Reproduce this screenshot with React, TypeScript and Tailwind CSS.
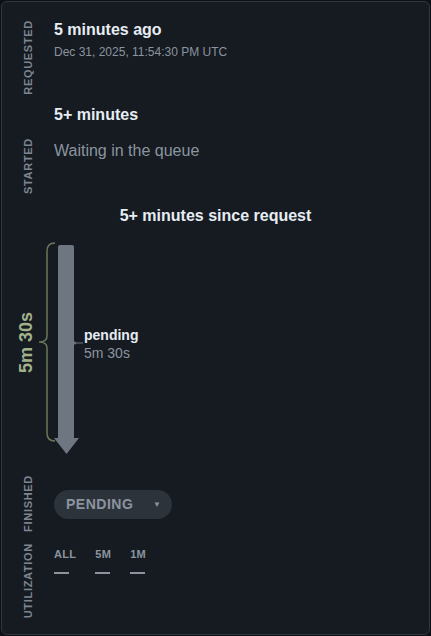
const font = { fontFamily: '"Liberation Sans", Arial, sans-serif' };

function SideLabel({ text }: { text: string }) {
  return (
    <div className="w-[52px] shrink-0 flex flex-col justify-end items-center pb-1">
      <span className="[writing-mode:vertical-rl] rotate-180 text-[11px] leading-[12px] font-bold tracking-[0.7px] text-[#7d8590] uppercase">
        {text}
      </span>
    </div>
  );
}

function Timeline() {
  return (
    <div className="flex pl-[13px] mt-[14px] h-[216px]">
      {/* total duration, read sideways */}
      <div className="w-[21px] h-[200px] mt-[3px] flex items-center justify-center">
        <span className="[writing-mode:vertical-rl] rotate-180 text-[18px] leading-[22px] font-bold text-[#a3b18a] whitespace-nowrap">
          5m 30s
        </span>
      </div>

      <svg width="48" height="216" viewBox="0 0 48 216" className="shrink-0">
        <path
          d="M19 3 Q11 3 11 11 L11 96 Q11 102 3 102 Q11 102 11 108 L11 193 Q11 201 19 201"
          fill="none"
          stroke="#6b7757"
          strokeWidth="1.5"
        />
        <path d="M22 7 Q22 5 24 5 L36 5 Q38 5 38 7 L38 198 L22 198 Z" fill="#6e7681" />
        <polygon points="18,198 43,198 30.5,214" fill="#6e7681" />
        <line x1="38" y1="103" x2="47" y2="103" stroke="#6e7681" strokeWidth="1" />
        <circle cx="38.5" cy="103" r="1.5" fill="#6e7681" />
      </svg>

      <div className="self-start mt-[86px] leading-[18px] text-[14px]">
        <div className="font-bold text-[#e6edf3]">pending</div>
        <div className="text-[#8b949e]">5m 30s</div>
      </div>
    </div>
  );
}

export default function App() {
  const windows = ['ALL', '5M', '1M'];

  return (
    <div className="h-[636px] w-full bg-[#0d1117] p-px" style={font}>
      <div className="h-full rounded-md border border-[#30363d] bg-[#161b22] pt-[13px] overflow-hidden">
        {/* Requested */}
        <div className="flex h-[84px]">
          <SideLabel text="Requested" />
          <div className="pt-[5px]">
            <div className="text-[16px] leading-[20px] font-bold text-[#e6edf3]">5 minutes ago</div>
            <div className="mt-[4px] text-[12px] leading-[16px] text-[#8b949e]">
              Dec 31, 2025, 11:54:30 PM UTC
            </div>
          </div>
        </div>

        {/* Started */}
        <div className="flex h-[99px]">
          <SideLabel text="Started" />
          <div className="pt-[6px]">
            <div className="text-[16px] leading-[20px] font-bold text-[#e6edf3]">5+ minutes</div>
            <div className="mt-[14px] text-[16px] leading-[24px] text-[#8b949e]">Waiting in the queue</div>
          </div>
        </div>

        {/* Chart */}
        <div className="h-[264px] pt-[8px]">
          <div className="text-center text-[16px] leading-[20px] font-bold text-[#e6edf3]">
            5+ minutes since request
          </div>
          <Timeline />
        </div>

        {/* Finished */}
        <div className="flex h-[74px]">
          <SideLabel text="Finished" />
          <div className="pt-[28px]">
            <button className="flex items-center h-[29px] w-[118px] rounded-full bg-[#2d333b] pl-[12px] pr-[11px]">
              <span className="text-[14px] font-bold tracking-[0.5px] text-[#8b949e]">PENDING</span>
              <span className="ml-auto text-[8px] text-[#8b949e]">▼</span>
            </button>
          </div>
        </div>

        {/* Utilization */}
        <div className="flex h-[86px]">
          <SideLabel text="Utilization" />
          <div className="pt-[11px] flex gap-[19px]">
            {windows.map((w) => (
              <div key={w} className="flex flex-col">
                <span className="text-[11px] leading-[14px] font-bold tracking-[0.3px] text-[#8b949e]">{w}</span>
                <div className="mt-[11px] h-[2px] w-[15px] bg-[#8b949e]" />
              </div>
            ))}
          </div>
        </div>
      </div>
    </div>
  );
}
